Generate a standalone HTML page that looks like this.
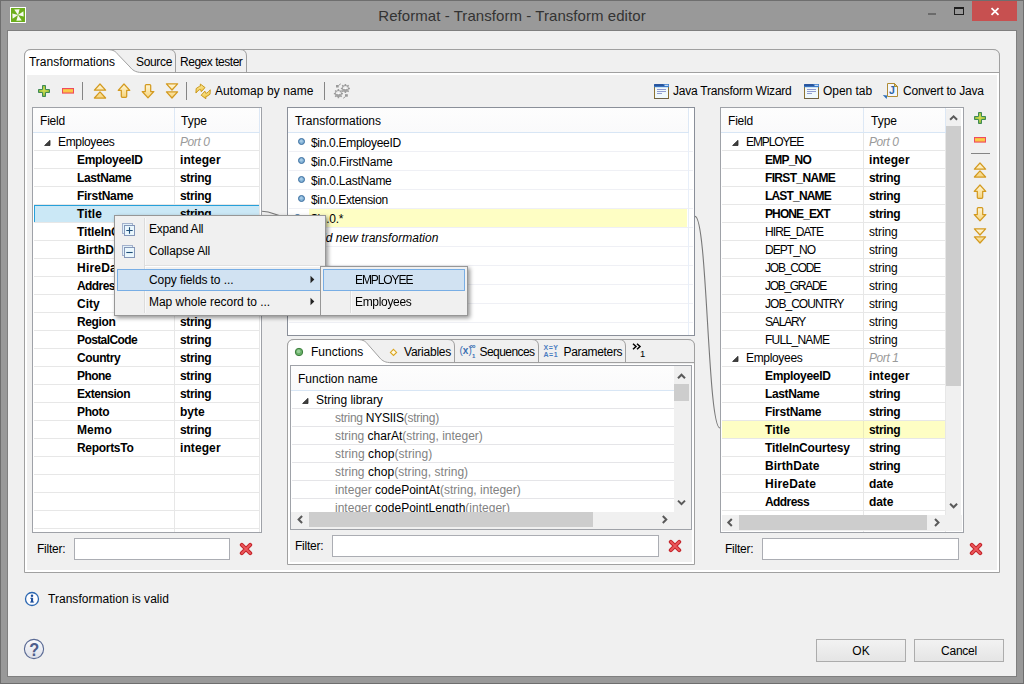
<!DOCTYPE html><html><head><meta charset="utf-8"><title>Reformat - Transform - Transform editor</title><style>
*{box-sizing:border-box;margin:0;padding:0}
html,body{width:1024px;height:684px;overflow:hidden}
body{position:relative;background:#999;font-family:"Liberation Sans",sans-serif;font-size:12px;color:#000;line-height:1}
.a{position:absolute}
.t{position:absolute;white-space:nowrap;height:18px;line-height:18px}
.b{font-weight:bold}
.i{font-style:italic}
.g{color:#828282}
.p{color:#9a9a9a}
.tbl{position:absolute;background:#fff;border:1px solid #9fa2a8;overflow:hidden}
.hl{position:absolute;height:1px;background:#e7e7e7}
.vl{position:absolute;width:1px;background:#e7e7e7}
.hdr{position:absolute;background:linear-gradient(#fdfdfd,#fafafb)}
.inp{position:absolute;background:#fff;border:1px solid #abadb3;height:22px}
.btn{position:absolute;border:1px solid #acacac;background:linear-gradient(#f2f2f2,#e5e5e5);text-align:center;line-height:23px;height:23px}
.sb{position:absolute;background:#f0f0f0}
.th{position:absolute;background:#cdcdcd}
.menu{position:absolute;background:#f0f0f0;border:1px solid #979797}
.msel{position:absolute;background:#d1e2f2;border:1px solid #78aee5}
</style></head><body><svg width="0" height="0" style="position:absolute"><defs><linearGradient id="gy" x1="0" y1="0" x2="0" y2="1"><stop offset="0" stop-color="#fff6d6"/><stop offset="1" stop-color="#f6d47c"/></linearGradient><radialGradient id="gg" cx=".5" cy=".45" r=".6"><stop offset="0" stop-color="#d6de54"/><stop offset=".55" stop-color="#a8c840"/><stop offset="1" stop-color="#6aa844"/></radialGradient><linearGradient id="gr" x1="0" y1="0" x2="0" y2="1"><stop offset="0" stop-color="#f6a83c"/><stop offset="0.5" stop-color="#fad24c"/><stop offset="1" stop-color="#f6a83c"/></linearGradient><linearGradient id="gy2" x1="0" y1="0" x2="0.3" y2="1"><stop offset="0" stop-color="#fff4b8"/><stop offset="1" stop-color="#f0c440"/></linearGradient><linearGradient id="hg" x1="0" y1="0" x2="0" y2="1"><stop offset="0" stop-color="#fbfbfd"/><stop offset="1" stop-color="#dcdfe8"/></linearGradient></defs></svg><div class="a" style="left:0;top:0;width:1024px;height:684px;border:1px solid #6e6e6e"></div><div class="a" style="left:7px;top:30px;width:1010px;height:647px;background:#f0f0f0;border:1px solid #7f7f7f"></div><div class="t" style="left:0px;top:6px;letter-spacing:0.06px;width:1024px;height:20px;line-height:20px;font-size:15px;text-align:center;color:#333;padding-left:0px">Reformat - Transform - Transform editor</div><svg class="a" style="left:10px;top:7px" width="16" height="16" viewBox="0 0 16 16"><rect width="16" height="16" fill="#fff"/><rect x="1" y="1" width="14" height="14" fill="#6cae1c"/><path d="M8 8 L4.2 2.6 L9.6 2.3Z M8 8 L13.4 4.2 L13.7 9.6Z M8 8 L11.8 13.4 L6.4 13.7Z M8 8 L2.6 11.8 L2.3 6.4Z" fill="#fff" opacity=".93"/></svg><div class="a" style="left:972px;top:1px;width:45px;height:20px;background:#c75050"></div><svg class="a" style="left:990px;top:7px" width="10" height="9" viewBox="0 0 10 9"><path d="M1.5 1.2 L8.5 7.8 M8.5 1.2 L1.5 7.8" stroke="#fff" stroke-width="1.8" fill="none"/></svg><div class="a" style="left:954px;top:7px;width:10px;height:8px;border:1px solid #1e1e1e;border-top-width:2px"></div><div class="a" style="left:928px;top:13px;width:8px;height:2px;background:#6b6b6b"></div><div class="a" style="left:24px;top:49px;width:976px;height:524px;border:1px solid #a0a0a0;border-radius:7px 7px 0 0;background:#fff"></div><div class="a" style="left:27px;top:75px;width:970px;height:495px;background:#f0f0f0"></div><svg class="a" style="left:24px;top:49px" width="976" height="24" viewBox="0 0 976 24"><path d="M0.5 24 L0.5 7 Q0.5 0.5 7 0.5 L969 0.5 Q975.5 0.5 975.5 7 L975.5 24 Z" fill="#f0f0f0" stroke="none"/><path d="M1 24 L1 7 Q1 1 7 1 L82.5 1 C90 1 92 3 94 5.5 L106 18 C108 20.5 111 23.5 118 23.5 L118 24Z" fill="#fff"/><path d="M82.5 0.5 C90 0.5 92 3 94 5.5 L106 18 C108 20.5 111 23.5 118 23.5 L975 23.5" fill="none" stroke="#a0a0a0"/><path d="M87 0.5 L145 0.5 Q151.5 0.5 151.5 7 L151.5 23" fill="none" stroke="#a0a0a0"/><path d="M216 0.5 Q222.5 0.5 222.5 7 L222.5 23" fill="none" stroke="#a0a0a0"/><path d="M0.5 24 L0.5 7 Q0.5 0.5 7 0.5 L969 0.5 Q975.5 0.5 975.5 7 L975.5 24" fill="none" stroke="#a0a0a0"/></svg><div class="t" style="left:29px;top:53px;letter-spacing:-0.02px;">Transformations</div><div class="t" style="left:136px;top:53px;letter-spacing:-0.34px;">Source</div><div class="t" style="left:180px;top:53px;letter-spacing:-0.47px;">Regex tester</div><div class="tbl" style="left:32px;top:107px;width:230px;height:426px"><div class="hdr" style="left:0;top:0;width:227px;height:25px;border-bottom:1px solid #d8e6f5"></div><div class="a" style="left:141px;top:0;width:1px;height:24px;background:#dde8f5"></div><div class="a" style="left:226px;top:0;width:1px;height:24px;background:#dde8f5"></div><div class="hl" style="left:1px;top:42px;width:226px"></div><div class="hl" style="left:1px;top:60px;width:226px"></div><div class="hl" style="left:1px;top:78px;width:226px"></div><div class="hl" style="left:1px;top:96px;width:226px"></div><div class="hl" style="left:1px;top:114px;width:226px"></div><div class="hl" style="left:1px;top:132px;width:226px"></div><div class="hl" style="left:1px;top:150px;width:226px"></div><div class="hl" style="left:1px;top:168px;width:226px"></div><div class="hl" style="left:1px;top:186px;width:226px"></div><div class="hl" style="left:1px;top:204px;width:226px"></div><div class="hl" style="left:1px;top:222px;width:226px"></div><div class="hl" style="left:1px;top:240px;width:226px"></div><div class="hl" style="left:1px;top:258px;width:226px"></div><div class="hl" style="left:1px;top:276px;width:226px"></div><div class="hl" style="left:1px;top:294px;width:226px"></div><div class="hl" style="left:1px;top:312px;width:226px"></div><div class="hl" style="left:1px;top:330px;width:226px"></div><div class="hl" style="left:1px;top:348px;width:226px"></div><div class="hl" style="left:1px;top:366px;width:226px"></div><div class="hl" style="left:1px;top:384px;width:226px"></div><div class="hl" style="left:1px;top:402px;width:226px"></div><div class="hl" style="left:1px;top:420px;width:226px"></div><div class="vl" style="left:141px;top:25px;height:426px"></div><div class="vl" style="left:226px;top:25px;height:426px"></div><div class="a" style="left:1px;top:97px;width:225px;height:17px;background:#cbe8f6;border-top:1px solid #26a0da;border-left:1px solid #26a0da"></div><svg class="a" style="left:11px;top:32px" width="7" height="6" viewBox="0 0 7 6"><path d="M6 0.3 L6 5.5 L0.6 5.5Z" fill="#404040" stroke="#2a2a2a" stroke-width=".8"/></svg><div class="t" style="left:25px;top:25px;letter-spacing:-0.33px;">Employees</div><div class="t i p" style="left:147px;top:25px;letter-spacing:-0.43px;">Port 0</div><div class="t b" style="left:44px;top:43px;letter-spacing:-0.31px;">EmployeeID</div><div class="t b" style="left:147px;top:43px;letter-spacing:0.09px;">integer</div><div class="t b" style="left:44px;top:61px;letter-spacing:-0.38px;">LastName</div><div class="t b" style="left:147px;top:61px;letter-spacing:-0.34px;">string</div><div class="t b" style="left:44px;top:79px;letter-spacing:-0.27px;">FirstName</div><div class="t b" style="left:147px;top:79px;letter-spacing:-0.34px;">string</div><div class="t b" style="left:44px;top:97px;letter-spacing:0.09px;">Title</div><div class="t b" style="left:147px;top:97px;letter-spacing:-0.34px;">string</div><div class="t b" style="left:44px;top:115px;letter-spacing:-0.15px;">TitleInCourtesy</div><div class="t b" style="left:147px;top:115px;letter-spacing:-0.34px;">string</div><div class="t b" style="left:44px;top:133px;letter-spacing:0.05px;">BirthDate</div><div class="t b" style="left:147px;top:133px;letter-spacing:-0.34px;">string</div><div class="t b" style="left:44px;top:151px;letter-spacing:0.22px;">HireDate</div><div class="t b" style="left:147px;top:151px;letter-spacing:-0.12px;">date</div><div class="t b" style="left:44px;top:169px;letter-spacing:-0.57px;">Address</div><div class="t b" style="left:147px;top:169px;letter-spacing:-0.34px;">string</div><div class="t b" style="left:44px;top:187px;letter-spacing:-0.04px;">City</div><div class="t b" style="left:147px;top:187px;letter-spacing:-0.34px;">string</div><div class="t b" style="left:44px;top:205px;letter-spacing:-0.38px;">Region</div><div class="t b" style="left:147px;top:205px;letter-spacing:-0.34px;">string</div><div class="t b" style="left:44px;top:223px;letter-spacing:-0.60px;">PostalCode</div><div class="t b" style="left:147px;top:223px;letter-spacing:-0.34px;">string</div><div class="t b" style="left:44px;top:241px;letter-spacing:-0.40px;">Country</div><div class="t b" style="left:147px;top:241px;letter-spacing:-0.34px;">string</div><div class="t b" style="left:44px;top:259px;letter-spacing:-0.53px;">Phone</div><div class="t b" style="left:147px;top:259px;letter-spacing:-0.34px;">string</div><div class="t b" style="left:44px;top:277px;letter-spacing:-0.48px;">Extension</div><div class="t b" style="left:147px;top:277px;letter-spacing:-0.34px;">string</div><div class="t b" style="left:44px;top:295px;letter-spacing:-0.36px;">Photo</div><div class="t b" style="left:147px;top:295px;letter-spacing:0.03px;">byte</div><div class="t b" style="left:44px;top:313px;letter-spacing:0.08px;">Memo</div><div class="t b" style="left:147px;top:313px;letter-spacing:-0.34px;">string</div><div class="t b" style="left:44px;top:331px;letter-spacing:-0.30px;">ReportsTo</div><div class="t b" style="left:147px;top:331px;letter-spacing:0.09px;">integer</div><div class="t" style="left:7px;top:4px;letter-spacing:-0.20px;">Field</div><div class="t" style="left:148px;top:4px;letter-spacing:-0.00px;">Type</div></div><div class="tbl" style="left:720px;top:107px;width:244px;height:426px"><div class="hdr" style="left:0;top:0;width:225px;height:25px;border-bottom:1px solid #d8e6f5"></div><div class="a" style="left:142px;top:0;width:1px;height:24px;background:#dde8f5"></div><div class="a" style="left:224px;top:0;width:1px;height:24px;background:#dde8f5"></div><div class="hl" style="left:1px;top:42px;width:224px"></div><div class="hl" style="left:1px;top:60px;width:224px"></div><div class="hl" style="left:1px;top:78px;width:224px"></div><div class="hl" style="left:1px;top:96px;width:224px"></div><div class="hl" style="left:1px;top:114px;width:224px"></div><div class="hl" style="left:1px;top:132px;width:224px"></div><div class="hl" style="left:1px;top:150px;width:224px"></div><div class="hl" style="left:1px;top:168px;width:224px"></div><div class="hl" style="left:1px;top:186px;width:224px"></div><div class="hl" style="left:1px;top:204px;width:224px"></div><div class="hl" style="left:1px;top:222px;width:224px"></div><div class="hl" style="left:1px;top:240px;width:224px"></div><div class="hl" style="left:1px;top:258px;width:224px"></div><div class="hl" style="left:1px;top:276px;width:224px"></div><div class="hl" style="left:1px;top:294px;width:224px"></div><div class="hl" style="left:1px;top:312px;width:224px"></div><div class="hl" style="left:1px;top:330px;width:224px"></div><div class="hl" style="left:1px;top:348px;width:224px"></div><div class="hl" style="left:1px;top:366px;width:224px"></div><div class="hl" style="left:1px;top:384px;width:224px"></div><div class="hl" style="left:1px;top:402px;width:224px"></div><div class="vl" style="left:142px;top:25px;height:426px"></div><div class="vl" style="left:224px;top:25px;height:426px"></div><div class="a" style="left:1px;top:313px;width:223px;height:17px;background:#fefec4"></div><div class="vl" style="left:142px;top:313px;height:17px;background:#ebebbb"></div><svg class="a" style="left:11px;top:32px" width="7" height="6" viewBox="0 0 7 6"><path d="M6 0.3 L6 5.5 L0.6 5.5Z" fill="#404040" stroke="#2a2a2a" stroke-width=".8"/></svg><div class="t" style="left:25px;top:25px;letter-spacing:-1.12px;">EMPLOYEE</div><div class="t i p" style="left:148px;top:25px;letter-spacing:-0.43px;">Port 0</div><div class="t b" style="left:44px;top:43px;letter-spacing:-0.78px;">EMP_NO</div><div class="t b" style="left:148px;top:43px;letter-spacing:0.09px;">integer</div><div class="t b" style="left:44px;top:61px;letter-spacing:-0.66px;">FIRST_NAME</div><div class="t b" style="left:148px;top:61px;letter-spacing:-0.34px;">string</div><div class="t b" style="left:44px;top:79px;letter-spacing:-0.82px;">LAST_NAME</div><div class="t b" style="left:148px;top:79px;letter-spacing:-0.34px;">string</div><div class="t b" style="left:44px;top:97px;letter-spacing:-0.89px;">PHONE_EXT</div><div class="t b" style="left:148px;top:97px;letter-spacing:-0.34px;">string</div><div class="t" style="left:44px;top:115px;letter-spacing:-0.93px;">HIRE_DATE</div><div class="t" style="left:148px;top:115px;letter-spacing:-0.14px;">string</div><div class="t" style="left:44px;top:133px;letter-spacing:-0.95px;">DEPT_NO</div><div class="t" style="left:148px;top:133px;letter-spacing:-0.14px;">string</div><div class="t" style="left:44px;top:151px;letter-spacing:-1.21px;">JOB_CODE</div><div class="t" style="left:148px;top:151px;letter-spacing:-0.14px;">string</div><div class="t" style="left:44px;top:169px;letter-spacing:-1.30px;">JOB_GRADE</div><div class="t" style="left:148px;top:169px;letter-spacing:-0.14px;">string</div><div class="t" style="left:44px;top:187px;letter-spacing:-0.97px;">JOB_COUNTRY</div><div class="t" style="left:148px;top:187px;letter-spacing:-0.14px;">string</div><div class="t" style="left:44px;top:205px;letter-spacing:-1.17px;">SALARY</div><div class="t" style="left:148px;top:205px;letter-spacing:-0.14px;">string</div><div class="t" style="left:44px;top:223px;letter-spacing:-0.72px;">FULL_NAME</div><div class="t" style="left:148px;top:223px;letter-spacing:-0.14px;">string</div><svg class="a" style="left:11px;top:248px" width="7" height="6" viewBox="0 0 7 6"><path d="M6 0.3 L6 5.5 L0.6 5.5Z" fill="#404040" stroke="#2a2a2a" stroke-width=".8"/></svg><div class="t" style="left:25px;top:241px;letter-spacing:-0.33px;">Employees</div><div class="t i p" style="left:148px;top:241px;letter-spacing:-0.43px;">Port 1</div><div class="t b" style="left:44px;top:259px;letter-spacing:-0.31px;">EmployeeID</div><div class="t b" style="left:148px;top:259px;letter-spacing:0.09px;">integer</div><div class="t b" style="left:44px;top:277px;letter-spacing:-0.38px;">LastName</div><div class="t b" style="left:148px;top:277px;letter-spacing:-0.34px;">string</div><div class="t b" style="left:44px;top:295px;letter-spacing:-0.27px;">FirstName</div><div class="t b" style="left:148px;top:295px;letter-spacing:-0.34px;">string</div><div class="t b" style="left:44px;top:313px;letter-spacing:0.09px;">Title</div><div class="t b" style="left:148px;top:313px;letter-spacing:-0.34px;">string</div><div class="t b" style="left:44px;top:331px;letter-spacing:-0.15px;">TitleInCourtesy</div><div class="t b" style="left:148px;top:331px;letter-spacing:-0.34px;">string</div><div class="t b" style="left:44px;top:349px;letter-spacing:0.05px;">BirthDate</div><div class="t b" style="left:148px;top:349px;letter-spacing:-0.34px;">string</div><div class="t b" style="left:44px;top:367px;letter-spacing:0.22px;">HireDate</div><div class="t b" style="left:148px;top:367px;letter-spacing:-0.12px;">date</div><div class="t b" style="left:44px;top:385px;letter-spacing:-0.57px;">Address</div><div class="t b" style="left:148px;top:385px;letter-spacing:-0.12px;">date</div><div class="t" style="left:7px;top:4px;letter-spacing:-0.20px;">Field</div><div class="t" style="left:150px;top:4px;letter-spacing:-0.00px;">Type</div></div><div class="tbl" style="left:287px;top:107px;width:408px;height:229px;border-color:#8a8f99"><div class="hdr" style="left:0;top:0;width:401px;height:25px;border-bottom:1px solid #d8e6f5"></div><div class="a" style="left:400px;top:0;width:1px;height:24px;background:#dde8f5"></div><div class="hl" style="left:1px;top:43px;width:404px;background:#eff0f5"></div><div class="hl" style="left:1px;top:62px;width:404px;background:#eff0f5"></div><div class="hl" style="left:1px;top:81px;width:404px;background:#eff0f5"></div><div class="hl" style="left:1px;top:100px;width:404px;background:#eff0f5"></div><div class="hl" style="left:1px;top:119px;width:404px;background:#eff0f5"></div><div class="hl" style="left:1px;top:138px;width:404px;background:#eff0f5"></div><div class="hl" style="left:1px;top:157px;width:404px;background:#eff0f5"></div><div class="hl" style="left:1px;top:176px;width:404px;background:#eff0f5"></div><div class="hl" style="left:1px;top:195px;width:404px;background:#eff0f5"></div><div class="hl" style="left:1px;top:214px;width:404px;background:#eff0f5"></div><div class="hl" style="left:1px;top:233px;width:404px;background:#eff0f5"></div><div class="vl" style="left:400px;top:25px;height:210px;background:#e8eff9"></div><div class="a" style="left:21px;top:101px;width:378px;height:18px;background:#fefec4"></div><svg class="a" style="left:10px;top:30px" width="8" height="8" viewBox="0 0 8 8"><circle cx="3.5" cy="3.5" r="3" fill="#7fb0d6" stroke="#3d6e9e" stroke-width="1"/><circle cx="3.3" cy="3.1" r="1.5" fill="#b4d3ea" opacity=".75"/></svg><div class="t" style="left:23px;top:26px;letter-spacing:-0.31px;">$in.0.EmployeeID</div><svg class="a" style="left:10px;top:49px" width="8" height="8" viewBox="0 0 8 8"><circle cx="3.5" cy="3.5" r="3" fill="#7fb0d6" stroke="#3d6e9e" stroke-width="1"/><circle cx="3.3" cy="3.1" r="1.5" fill="#b4d3ea" opacity=".75"/></svg><div class="t" style="left:23px;top:45px;letter-spacing:-0.21px;">$in.0.FirstName</div><svg class="a" style="left:10px;top:68px" width="8" height="8" viewBox="0 0 8 8"><circle cx="3.5" cy="3.5" r="3" fill="#7fb0d6" stroke="#3d6e9e" stroke-width="1"/><circle cx="3.3" cy="3.1" r="1.5" fill="#b4d3ea" opacity=".75"/></svg><div class="t" style="left:23px;top:64px;letter-spacing:-0.25px;">$in.0.LastName</div><svg class="a" style="left:10px;top:87px" width="8" height="8" viewBox="0 0 8 8"><circle cx="3.5" cy="3.5" r="3" fill="#7fb0d6" stroke="#3d6e9e" stroke-width="1"/><circle cx="3.3" cy="3.1" r="1.5" fill="#b4d3ea" opacity=".75"/></svg><div class="t" style="left:23px;top:83px;letter-spacing:-0.35px;">$in.0.Extension</div><svg class="a" style="left:6px;top:106px" width="8" height="8" viewBox="0 0 8 8"><circle cx="3.5" cy="3.5" r="3" fill="#7fb0d6" stroke="#3d6e9e" stroke-width="1"/><circle cx="3.3" cy="3.1" r="1.5" fill="#b4d3ea" opacity=".75"/></svg><div class="t" style="left:23px;top:102px;letter-spacing:-0.26px;">$in.0.*</div><div class="t i" style="left:23px;top:121px;letter-spacing:0.03px;">Add new transformation</div><div class="t" style="left:7px;top:4px;letter-spacing:-0.02px;">Transformations</div></div><div class="a" style="left:287px;top:339px;width:408px;height:226px;border:1px solid #a0a0a0;border-radius:7px 7px 0 0;background:#fff"></div><div class="a" style="left:290px;top:365px;width:402px;height:197px;background:#f0f0f0"></div><svg class="a" style="left:287px;top:339px" width="408" height="25" viewBox="0 0 408 25"><path d="M0.5 25 L0.5 7 Q0.5 0.5 7 0.5 L401 0.5 Q407.5 0.5 407.5 7 L407.5 25 Z" fill="#f0f0f0"/><path d="M1 25 L1 7 Q1 1 7 1 L70 1 C77 1 79 3 81 5.5 L92 18 C94 20.5 97 23.5 102.5 23.5 L102.5 25Z" fill="#fff"/><path d="M70 0.5 C77 0.5 79 3 81 5.5 L92 18 C94 20.5 97 23.5 102.5 23.5 L407 23.5" fill="none" stroke="#a0a0a0"/><path d="M74 0.5 L161 0.5 Q167.5 0.5 167.5 7 L167.5 23" fill="none" stroke="#a0a0a0"/><path d="M245 0.5 Q251.5 0.5 251.5 7 L251.5 23 M332 0.5 Q338.5 0.5 338.5 7 L338.5 23" fill="none" stroke="#a0a0a0"/><path d="M0.5 25 L0.5 7 Q0.5 0.5 7 0.5 L401 0.5 Q407.5 0.5 407.5 7 L407.5 25" fill="none" stroke="#a0a0a0"/></svg><svg class="a" style="left:294px;top:347px" width="10" height="10" viewBox="0 0 10 10"><circle cx="5" cy="5" r="3.7" fill="#68b068" stroke="#3f7f3f"/><circle cx="4.6" cy="4.4" r="1.8" fill="#a5d6a5" opacity=".8"/></svg><div class="t" style="left:311px;top:343px;letter-spacing:0.03px;">Functions</div><svg class="a" style="left:389px;top:348px" width="9" height="9" viewBox="0 0 9 9"><path d="M4.5 1.3 L7.6 4.4 L4.5 7.5 L1.4 4.4Z" fill="#fffbe6" stroke="#dba622" stroke-width="1.1"/></svg><div class="t" style="left:404px;top:343px;letter-spacing:-0.23px;">Variables</div><div class="t" style="left:479.5px;top:343px;letter-spacing:-0.56px;">Sequences</div><div class="t" style="left:563.5px;top:343px;letter-spacing:-0.33px;">Parameters</div><svg class="a" style="left:632px;top:343px" width="10" height="7" viewBox="0 0 10 7"><path d="M1 0.8 L4 3.5 L1 6.2 M5 0.8 L8 3.5 L5 6.2" fill="none" stroke="#000" stroke-width="1.5"/></svg><div class="t" style="left:640px;top:345px;font-size:9.5px">1</div><div class="t" style="left:459.5px;top:342px;font-size:10px;color:#3a6fb2">(<b>x</b>)</div><div class="t b" style="left:469.5px;top:337px;font-size:8.5px;color:#3a6fb2">&infin;</div><div class="t b" style="left:472px;top:347px;font-size:6px;color:#3a6fb2">1</div><div class="t b" style="left:543.5px;top:339px;font-size:7px;color:#4a7cc0;letter-spacing:.5px">X=Y</div><div class="t b" style="left:543.5px;top:346px;font-size:7px;color:#4a7cc0;letter-spacing:.5px">A=1</div><div class="tbl" style="left:290px;top:365px;width:402px;height:165px"><div class="hdr" style="left:0;top:0;width:383px;height:25px;border-bottom:1px solid #d8e6f5"></div><div class="hl" style="left:1px;top:42px;width:382px;background:#e5e5e8"></div><div class="hl" style="left:1px;top:60px;width:382px;background:#e5e5e8"></div><div class="hl" style="left:1px;top:78px;width:382px;background:#e5e5e8"></div><div class="hl" style="left:1px;top:96px;width:382px;background:#e5e5e8"></div><div class="hl" style="left:1px;top:114px;width:382px;background:#e5e5e8"></div><div class="hl" style="left:1px;top:132px;width:382px;background:#e5e5e8"></div><div class="t" style="left:7px;top:4px;letter-spacing:0.03px;">Function name</div><svg class="a" style="left:11px;top:32px" width="7" height="6" viewBox="0 0 7 6"><path d="M6 0.3 L6 5.5 L0.6 5.5Z" fill="#404040" stroke="#2a2a2a" stroke-width=".8"/></svg><div class="t" style="left:25px;top:25px;letter-spacing:-0.04px;">String library</div><div class="t" style="left:44px;top:43px;letter-spacing:-0.26px;"><span class="g">string</span> NYSIIS<span class="g">(string)</span></div><div class="t" style="left:44px;top:61px;letter-spacing:-0.01px;"><span class="g">string</span> charAt<span class="g">(string, integer)</span></div><div class="t" style="left:44px;top:79px;letter-spacing:0.06px;"><span class="g">string</span> chop<span class="g">(string)</span></div><div class="t" style="left:44px;top:97px;letter-spacing:0.04px;"><span class="g">string</span> chop<span class="g">(string, string)</span></div><div class="t" style="left:44px;top:115px;letter-spacing:0.01px;"><span class="g">integer</span> codePointAt<span class="g">(string, integer)</span></div><div class="t" style="left:44px;top:133px;letter-spacing:0.01px;"><span class="g">integer</span> codePointLength<span class="g">(integer)</span></div><div class="sb" style="left:383px;top:0;width:17px;height:146px"></div><div class="th" style="left:383px;top:18px;width:15px;height:17px"></div><div class="sb" style="left:0;top:146px;width:400px;height:17px"></div><div class="th" style="left:18px;top:146px;width:284px;height:15px"></div></div><div class="t" style="left:37px;top:540px;letter-spacing:-0.24px;">Filter:</div><div class="inp" style="left:74px;top:538px;width:156px"></div><div class="t" style="left:295px;top:537px;letter-spacing:-0.24px;">Filter:</div><div class="inp" style="left:332px;top:535px;width:327px"></div><div class="t" style="left:725px;top:540px;letter-spacing:-0.24px;">Filter:</div><div class="inp" style="left:762px;top:538px;width:197px"></div><svg class="a" style="left:239px;top:542px" width="14" height="14" viewBox="0 0 14 14"><path d="M2.8 2.8 L11.2 11.2 M11.2 2.8 L2.8 11.2" stroke="#c4242a" stroke-width="4" stroke-linecap="round"/><path d="M2.9 2.9 L11.1 11.1 M11.1 2.9 L2.9 11.1" stroke="#ec585c" stroke-width="2" stroke-linecap="round"/></svg><svg class="a" style="left:668px;top:539px" width="14" height="14" viewBox="0 0 14 14"><path d="M2.8 2.8 L11.2 11.2 M11.2 2.8 L2.8 11.2" stroke="#c4242a" stroke-width="4" stroke-linecap="round"/><path d="M2.9 2.9 L11.1 11.1 M11.1 2.9 L2.9 11.1" stroke="#ec585c" stroke-width="2" stroke-linecap="round"/></svg><svg class="a" style="left:969px;top:542px" width="14" height="14" viewBox="0 0 14 14"><path d="M2.8 2.8 L11.2 11.2 M11.2 2.8 L2.8 11.2" stroke="#c4242a" stroke-width="4" stroke-linecap="round"/><path d="M2.9 2.9 L11.1 11.1 M11.1 2.9 L2.9 11.1" stroke="#ec585c" stroke-width="2" stroke-linecap="round"/></svg><svg class="a" style="left:24px;top:591px" width="16" height="16" viewBox="0 0 16 16"><circle cx="8" cy="8" r="6.5" fill="#fdfdff" stroke="#2a66b0" stroke-width="1.3"/><rect x="7" y="6.8" width="2.1" height="4.4" fill="#1d4f9c"/><circle cx="8" cy="4.7" r="1.25" fill="#1d4f9c"/><rect x="6.2" y="6.8" width="2" height="0.9" fill="#1d4f9c"/><rect x="6" y="10.6" width="4.1" height="0.9" fill="#1d4f9c"/></svg><div class="t" style="left:48px;top:590px;letter-spacing:0.03px;">Transformation is valid</div><svg class="a" style="left:23px;top:638px" width="22" height="22" viewBox="0 0 22 22"><circle cx="11" cy="11" r="9.6" fill="url(#hg)" stroke="#5a6a94" stroke-width="1.1"/><text transform="translate(11.2,17.6) scale(.86,1)" text-anchor="middle" font-family="Liberation Sans" font-weight="bold" font-size="19" fill="#4e5e8c">?</text></svg><div class="btn" style="left:816px;top:639px;width:90px">OK</div><div class="btn" style="left:914px;top:639px;width:90px;letter-spacing:-.25px">Cancel</div><svg class="a" style="left:38px;top:85px" width="12" height="12" viewBox="0 0 12 12"><path d="M4.5 0.5 H7.5 V4.5 H11.5 V7.5 H7.5 V11.5 H4.5 V7.5 H0.5 V4.5 H4.5Z" fill="url(#gg)" stroke="#3f8a56" stroke-width="1"/></svg><svg class="a" style="left:62px;top:88px" width="12" height="6" viewBox="0 0 12 6"><rect x="0.5" y="0.5" width="11" height="4.6" fill="url(#gr)" stroke="#f04a5e" stroke-width="1"/></svg><div class="a" style="left:82px;top:82px;width:1px;height:18px;background:#858585"></div><svg class="a" style="left:93px;top:83px" width="14" height="16" viewBox="0 0 14 16"><path d="M7 1 L12.6 7.2 H1.4Z M7 8.9 L12.6 15 H1.4Z" fill="url(#gy)" stroke="#d39a20" stroke-width="1.25" stroke-linejoin="round"/></svg><svg class="a" style="left:117px;top:83px" width="14" height="16" viewBox="0 0 14 16"><path d="M7 1 L12.8 7.3 H9.7 V13.3 Q9.7 14.3 8.7 14.3 H5.3 Q4.3 14.3 4.3 13.3 V7.3 H1.2Z" fill="url(#gy)" stroke="#d39a20" stroke-width="1.25" stroke-linejoin="round"/></svg><svg class="a" style="left:141px;top:83px" width="14" height="16" viewBox="0 0 14 16"><path d="M7 14.8 L12.8 8.5 H9.7 V2.5 Q9.7 1.5 8.7 1.5 H5.3 Q4.3 1.5 4.3 2.5 V8.5 H1.2Z" fill="url(#gy)" stroke="#d39a20" stroke-width="1.25" stroke-linejoin="round"/></svg><svg class="a" style="left:165px;top:83px" width="14" height="16" viewBox="0 0 14 16"><path d="M7 7 L12.6 0.8 H1.4Z M7 15 L12.6 8.9 H1.4Z" fill="url(#gy)" stroke="#d39a20" stroke-width="1.25" stroke-linejoin="round"/></svg><div class="a" style="left:186px;top:82px;width:1px;height:18px;background:#858585"></div><svg class="a" style="left:195px;top:83px" width="17" height="17" viewBox="0 0 17 17"><g fill="url(#gy2)" stroke="#c9981c" stroke-width="1" stroke-linejoin="round"><path d="M0.94 10.04 L1.17 5.55 L4.40 3.40 L5.35 3.20 L5.35 1.05 L10.00 4.57 L6.30 8.67 L5.74 6.70 L4.40 6.70 L2.80 7.90Z"/><path d="M15.26 6.76 L15.03 11.25 L11.80 13.40 L10.85 13.60 L10.85 15.75 L6.20 12.23 L9.90 8.13 L10.46 10.10 L11.80 10.10 L13.40 8.90Z"/></g></svg><div class="t" style="left:215px;top:82px;letter-spacing:0.08px;">Automap by name</div><div class="a" style="left:324px;top:82px;width:1px;height:18px;background:#858585"></div><svg class="a" style="left:333px;top:83px" width="18" height="16" viewBox="0 0 18 16"><g fill="#9c9c9c"><path d="M16.94 4.78 L16.94 6.22 L15.69 6.35 L15.33 7.23 L16.12 8.20 L15.10 9.22 L14.13 8.43 L13.25 8.79 L13.12 10.04 L11.68 10.04 L11.55 8.79 L10.67 8.43 L9.70 9.22 L8.68 8.20 L9.47 7.23 L9.11 6.35 L7.86 6.22 L7.86 4.78 L9.11 4.65 L9.47 3.77 L8.68 2.80 L9.70 1.78 L10.67 2.57 L11.55 2.21 L11.68 0.96 L13.12 0.96 L13.25 2.21 L14.13 2.57 L15.10 1.78 L16.12 2.80 L15.33 3.77 L15.69 4.65Z"/><path d="M9.94 9.88 L9.94 11.32 L8.69 11.45 L8.33 12.33 L9.12 13.30 L8.10 14.32 L7.13 13.53 L6.25 13.89 L6.12 15.14 L4.68 15.14 L4.55 13.89 L3.67 13.53 L2.70 14.32 L1.68 13.30 L2.47 12.33 L2.11 11.45 L0.86 11.32 L0.86 9.88 L2.11 9.75 L2.47 8.87 L1.68 7.90 L2.70 6.88 L3.67 7.67 L4.55 7.31 L4.68 6.06 L6.12 6.06 L6.25 7.31 L7.13 7.67 L8.10 6.88 L9.12 7.90 L8.33 8.87 L8.69 9.75Z"/></g><circle cx="12.4" cy="5.5" r="2.5" fill="#ececec"/><circle cx="5.4" cy="10.6" r="2.5" fill="#ececec"/><path d="M9.9 5.9 A2.5 2.5 0 0 0 14.9 5.9Z M2.9 11 A2.5 2.5 0 0 0 7.9 11Z" fill="#a2a2a2"/><rect x="11.7" y="4.6" width="1.4" height="1.6" fill="#fff"/><rect x="4.7" y="9.7" width="1.4" height="1.6" fill="#fff"/><path d="M5.6 2.4 L7.8 0.8 M10.2 15.3 L12.4 13.7" stroke="#9a9a9a" stroke-width="1" fill="none"/><rect x="3" y="2" width="2.7" height="2.5" fill="#9a9a9a"/><rect x="12" y="11.2" width="2.8" height="2.5" fill="#9a9a9a"/></svg><svg class="a" style="left:654px;top:84px" width="15" height="15" viewBox="0 0 15 15"><rect x="0.5" y="2.5" width="14" height="12" fill="#f0f9fc" stroke="#8c7232"/><path d="M0.5 14.5 H14.5" stroke="#6c6044"/><rect x="0" y="0" width="15" height="3.2" fill="#3d7ecd"/><path d="M1 0 H9 L10.8 2.2 H0 V1Z" fill="#2a559c"/><rect x="10.6" y="0.8" width="3.6" height="1" fill="#fff" opacity=".9"/><path d="M3 5.5 H12 M3 7.5 H12 M3 9.5 H8" stroke="#8f9bd0" stroke-width="1"/></svg><div class="t" style="left:673px;top:82px;letter-spacing:-0.23px;">Java Transform Wizard</div><svg class="a" style="left:804px;top:84px" width="15" height="15" viewBox="0 0 15 15"><rect x="0.5" y="2.5" width="14" height="12" fill="#f0f9fc" stroke="#8c7232"/><path d="M0.5 14.5 H14.5" stroke="#6c6044"/><rect x="0" y="0" width="15" height="3.2" fill="#3d7ecd"/><path d="M1 0 H9 L10.8 2.2 H0 V1Z" fill="#2a559c"/><rect x="10.6" y="0.8" width="3.6" height="1" fill="#fff" opacity=".9"/><path d="M3 5.5 H12 M3 7.5 H12 M3 9.5 H8" stroke="#8f9bd0" stroke-width="1"/></svg><div class="t" style="left:823px;top:82px;letter-spacing:-0.04px;">Open tab</div><svg class="a" style="left:882px;top:82px" width="17" height="18" viewBox="0 0 17 18"><path d="M5.5 1.5 H12.5 L15.5 4.5 V14.5 H5.5Z" fill="#f2f6fd" stroke="#b08c34"/><path d="M12.5 1.5 V4.5 H15.5Z" fill="#e9c468" stroke="#b08c34" stroke-linejoin="round"/><text x="10" y="12.3" text-anchor="middle" font-family="Liberation Sans" font-weight="bold" font-size="10.5" fill="#2f65a8">J</text><path d="M0.8 13 L5.1 13.4 L4.7 16.9Z" fill="#2b6cb5"/></svg><div class="t" style="left:903px;top:82px;letter-spacing:-0.23px;">Convert to Java</div><svg class="a" style="left:974px;top:112px" width="12" height="12" viewBox="0 0 12 12"><path d="M4.5 0.5 H7.5 V4.5 H11.5 V7.5 H7.5 V11.5 H4.5 V7.5 H0.5 V4.5 H4.5Z" fill="url(#gg)" stroke="#3f8a56" stroke-width="1"/></svg><svg class="a" style="left:974px;top:137px" width="12" height="6" viewBox="0 0 12 6"><rect x="0.5" y="0.5" width="11" height="4.6" fill="url(#gr)" stroke="#f04a5e" stroke-width="1"/></svg><div class="a" style="left:971px;top:153px;width:19px;height:1px;background:#858585"></div><svg class="a" style="left:973px;top:162px" width="14" height="16" viewBox="0 0 14 16"><path d="M7 1 L12.6 7.2 H1.4Z M7 8.9 L12.6 15 H1.4Z" fill="url(#gy)" stroke="#d39a20" stroke-width="1.25" stroke-linejoin="round"/></svg><svg class="a" style="left:973px;top:184px" width="14" height="16" viewBox="0 0 14 16"><path d="M7 1 L12.8 7.3 H9.7 V13.3 Q9.7 14.3 8.7 14.3 H5.3 Q4.3 14.3 4.3 13.3 V7.3 H1.2Z" fill="url(#gy)" stroke="#d39a20" stroke-width="1.25" stroke-linejoin="round"/></svg><svg class="a" style="left:973px;top:206px" width="14" height="16" viewBox="0 0 14 16"><path d="M7 14.8 L12.8 8.5 H9.7 V2.5 Q9.7 1.5 8.7 1.5 H5.3 Q4.3 1.5 4.3 2.5 V8.5 H1.2Z" fill="url(#gy)" stroke="#d39a20" stroke-width="1.25" stroke-linejoin="round"/></svg><svg class="a" style="left:973px;top:228px" width="14" height="16" viewBox="0 0 14 16"><path d="M7 7 L12.6 0.8 H1.4Z M7 15 L12.6 8.9 H1.4Z" fill="url(#gy)" stroke="#d39a20" stroke-width="1.25" stroke-linejoin="round"/></svg><div class="sb" style="left:946px;top:109px;width:15px;height:406px"></div><div class="th" style="left:946px;top:126px;width:15px;height:260px"></div><svg class="a" style="left:947px;top:112px" width="12" height="12" viewBox="0 0 12 12"><path d="M-3.5 1.8 L0 -1.7 L3.5 1.8" transform="translate(6.6,6.0) rotate(0)" fill="none" stroke="#595959" stroke-width="2" stroke-linejoin="miter"/></svg><svg class="a" style="left:947px;top:499px" width="12" height="12" viewBox="0 0 12 12"><path d="M-3.5 1.8 L0 -1.7 L3.5 1.8" transform="translate(6.6,6.6) rotate(180)" fill="none" stroke="#595959" stroke-width="2" stroke-linejoin="miter"/></svg><div class="sb" style="left:722px;top:515px;width:240px;height:16px"></div><div class="th" style="left:739px;top:515px;width:188px;height:15px"></div><svg class="a" style="left:724px;top:516px" width="12" height="12" viewBox="0 0 12 12"><path d="M-3.5 1.8 L0 -1.7 L3.5 1.8" transform="translate(6.0,6.5) rotate(270)" fill="none" stroke="#595959" stroke-width="2" stroke-linejoin="miter"/></svg><svg class="a" style="left:930px;top:516px" width="12" height="12" viewBox="0 0 12 12"><path d="M-3.5 1.8 L0 -1.7 L3.5 1.8" transform="translate(6.8,6.5) rotate(90)" fill="none" stroke="#595959" stroke-width="2" stroke-linejoin="miter"/></svg><svg class="a" style="left:675px;top:370px" width="12" height="12" viewBox="0 0 12 12"><path d="M-3.5 1.8 L0 -1.7 L3.5 1.8" transform="translate(6.5,6.4) rotate(0)" fill="none" stroke="#595959" stroke-width="2" stroke-linejoin="miter"/></svg><svg class="a" style="left:675px;top:496px" width="12" height="12" viewBox="0 0 12 12"><path d="M-3.5 1.8 L0 -1.7 L3.5 1.8" transform="translate(6.5,6.4) rotate(180)" fill="none" stroke="#595959" stroke-width="2" stroke-linejoin="miter"/></svg><svg class="a" style="left:294px;top:513px" width="12" height="12" viewBox="0 0 12 12"><path d="M-3.5 1.8 L0 -1.7 L3.5 1.8" transform="translate(6.3,6.5) rotate(270)" fill="none" stroke="#595959" stroke-width="2" stroke-linejoin="miter"/></svg><svg class="a" style="left:658px;top:513px" width="12" height="12" viewBox="0 0 12 12"><path d="M-3.5 1.8 L0 -1.7 L3.5 1.8" transform="translate(6.6,6.5) rotate(90)" fill="none" stroke="#595959" stroke-width="2" stroke-linejoin="miter"/></svg><svg class="a" style="left:0;top:0" width="1024" height="684" viewBox="0 0 1024 684"><g fill="none" stroke="#787878" stroke-width="1.1"><path d="M695 216.4 C707.5 216.4 707.5 428 720 428"/><path d="M262 211.3 C274.5 211.3 274.5 216.5 287 216.5"/></g></svg><div class="a" style="left:0;top:0;width:1024px;height:684px;filter:drop-shadow(2.5px 2.5px 2px rgba(0,0,0,.42))"><div class="menu" style="left:114px;top:215px;width:212px;height:101px"><div class="a" style="left:29px;top:2px;width:1px;height:95px;background:#dcdcdc"></div><div class="a" style="left:30px;top:2px;width:1px;height:95px;background:#f9f9f9"></div><div class="a" style="left:30px;top:49px;width:180px;height:1px;background:#e0e0e0"></div><div class="a" style="left:30px;top:50px;width:180px;height:1px;background:#fff"></div><div class="msel" style="left:2px;top:53px;width:206px;height:22px"></div><div class="t" style="left:34px;top:4px;letter-spacing:-0.25px;">Expand All</div><div class="t" style="left:34px;top:26px;letter-spacing:-0.13px;">Collapse All</div><div class="t" style="left:34px;top:55px;letter-spacing:-0.09px;">Copy fields to ...</div><div class="t" style="left:34px;top:77px;letter-spacing:-0.04px;">Map whole record to ...</div><svg class="a" style="left:195px;top:59px" width="5" height="9" viewBox="0 0 5 9"><path d="M0.5 0.8 L4.3 4.5 L0.5 8.2Z" fill="#222"/></svg><svg class="a" style="left:195px;top:81px" width="5" height="9" viewBox="0 0 5 9"><path d="M0.5 0.8 L4.3 4.5 L0.5 8.2Z" fill="#222"/></svg><svg class="a" style="left:7px;top:7px" width="14" height="14" viewBox="0 0 14 14"><rect x="0.5" y="0.5" width="10" height="10" fill="#e2f1f9" stroke="#a3b1cc"/><rect x="2.5" y="2.5" width="10" height="10" fill="#eaf7fd" stroke="#8496b8"/><path d="M4.3 7.5 H10.7 M7.5 4.3 V10.7" stroke="#1f4e79" stroke-width="1.1"/></svg><svg class="a" style="left:7px;top:29px" width="14" height="14" viewBox="0 0 14 14"><rect x="0.5" y="0.5" width="10" height="10" fill="#e2f1f9" stroke="#a3b1cc"/><rect x="2.5" y="2.5" width="10" height="10" fill="#eaf7fd" stroke="#8496b8"/><path d="M4.3 7.5 H10.7" stroke="#1f4e79" stroke-width="1.1"/></svg></div><div class="menu" style="left:320px;top:266px;width:148px;height:50px"><div class="a" style="left:29px;top:2px;width:1px;height:44px;background:#dcdcdc"></div><div class="a" style="left:30px;top:2px;width:1px;height:44px;background:#f9f9f9"></div><div class="msel" style="left:2px;top:2px;width:142px;height:22px"></div><div class="t" style="left:34px;top:4px;letter-spacing:-1.08px;">EMPLOYEE</div><div class="t" style="left:34px;top:26px;letter-spacing:-0.32px;">Employees</div></div></div></body></html>
